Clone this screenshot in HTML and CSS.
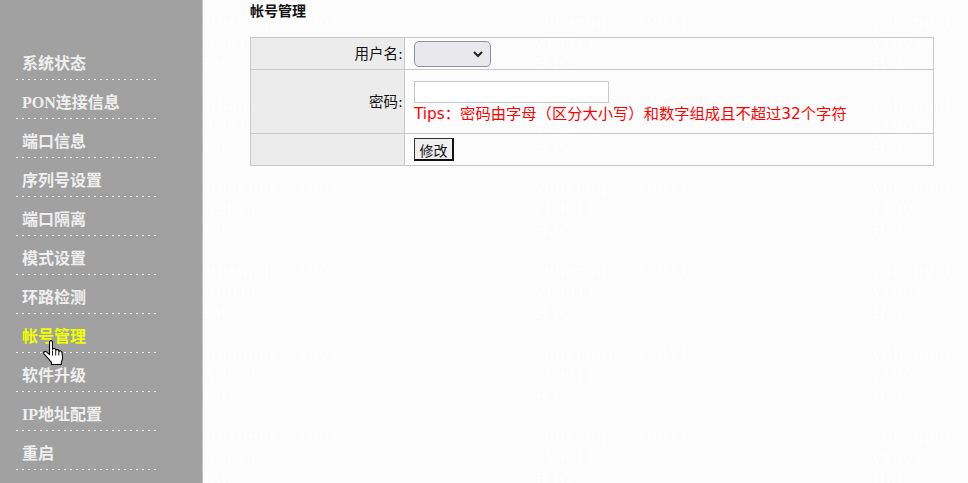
FILE: index.html
```html
<!DOCTYPE html>
<html>
<head>
    <meta charset="utf-8">
    <link rel="stylesheet" href="styles.css">
</head>
<body>
    <div class="watermark">
        <div class="mark">yuhangqi&nbsp;&nbsp;&nbsp;&nbsp;19011<br>y19011<br>H3C</div>
        <div class="mark">yuhangqi&nbsp;&nbsp;&nbsp;&nbsp;19011<br>y19011<br>H3C</div>
        <div class="mark">yuhangqi&nbsp;&nbsp;&nbsp;&nbsp;19011<br>y19011<br>H3C</div>
        <div class="mark">yuhangqi&nbsp;&nbsp;&nbsp;&nbsp;19011<br>y19011<br>H3C</div>
        <div class="mark">yuhangqi&nbsp;&nbsp;&nbsp;&nbsp;19011<br>y19011<br>H3C</div>
        <div class="mark">yuhangqi&nbsp;&nbsp;&nbsp;&nbsp;19011<br>y19011<br>H3C</div>
        <div class="mark">yuhangqi&nbsp;&nbsp;&nbsp;&nbsp;19011<br>y19011<br>H3C</div>
        <div class="mark">yuhangqi&nbsp;&nbsp;&nbsp;&nbsp;19011<br>y19011<br>H3C</div>
        <div class="mark">yuhangqi&nbsp;&nbsp;&nbsp;&nbsp;19011<br>y19011<br>H3C</div>
        <div class="mark">yuhangqi&nbsp;&nbsp;&nbsp;&nbsp;19011<br>y19011<br>H3C</div>
        <div class="mark">yuhangqi&nbsp;&nbsp;&nbsp;&nbsp;19011<br>y19011<br>H3C</div>
        <div class="mark">yuhangqi&nbsp;&nbsp;&nbsp;&nbsp;19011<br>y19011<br>H3C</div>
        <div class="mark">yuhangqi&nbsp;&nbsp;&nbsp;&nbsp;19011<br>y19011<br>H3C</div>
        <div class="mark">yuhangqi&nbsp;&nbsp;&nbsp;&nbsp;19011<br>y19011<br>H3C</div>
        <div class="mark">yuhangqi&nbsp;&nbsp;&nbsp;&nbsp;19011<br>y19011<br>H3C</div>
        <div class="mark">yuhangqi&nbsp;&nbsp;&nbsp;&nbsp;19011<br>y19011<br>H3C</div>
        <div class="mark">yuhangqi&nbsp;&nbsp;&nbsp;&nbsp;19011<br>y19011<br>H3C</div>
        <div class="mark">yuhangqi&nbsp;&nbsp;&nbsp;&nbsp;19011<br>y19011<br>H3C</div>
    </div>

    <div class="page">
        <div class="sidebar">
            <ul class="menu">
                <li class="menu-item">系统状态</li>
                <li class="menu-item">PON连接信息</li>
                <li class="menu-item">端口信息</li>
                <li class="menu-item">序列号设置</li>
                <li class="menu-item">端口隔离</li>
                <li class="menu-item">模式设置</li>
                <li class="menu-item">环路检测</li>
                <li class="menu-item active">帐号管理</li>
                <li class="menu-item">软件升级</li>
                <li class="menu-item">IP地址配置</li>
                <li class="menu-item">重启</li>
            </ul>
        </div>

        <div class="content">
            <h1 class="title">帐号管理</h1>
            <table class="form-table">
                <tr class="row-user">
                    <td class="label">用户名:</td>
                    <td class="field">
                        <select class="user-select"><option></option></select>
                    </td>
                </tr>
                <tr class="row-pass">
                    <td class="label">密码:</td>
                    <td class="field">
                        <input class="pass-input" type="password">
                        <div class="tips">Tips：密码由字母（区分大小写）和数字组成且不超过32个字符</div>
                    </td>
                </tr>
                <tr class="row-submit">
                    <td class="label"></td>
                    <td class="field"><button class="submit-btn">修改</button></td>
                </tr>
            </table>
        </div>
    </div>

    <svg class="cursor" width="23" height="26" viewBox="0 0 23 26">
        <path d="M6.500 2c0-1.800 3-1.800 3 0v7.500c.3-1.300 2.900-1.300 3.100 0l.1 1c.4-1.200 2.900-1.100 3.100.200l.1.800c.6-1 2.800-.7 3 .7l.7 5.300c.1 1.700-.5 3.200-1.300 4.500v2.500H8.500v-2.300c-1-.7-1.700-1.500-2.400-2.700L1 13.800c-1-1.500.8-3.200 2.300-2.100l3.200 3z" fill="#fff" stroke="#000" stroke-width="1.100" stroke-linejoin="round"/>
        <path d="M9.500 10.500v5M12.700 11v4.500M15.800 11.500v4" fill="none" stroke="#000" stroke-width=".9"/>
    </svg>
</body>
</html>
```

FILE: styles.css
```css
body {
    margin: 0;
    height: 483px;
    overflow: hidden;
    background: #fcfcfc;
    font-family: "Liberation Serif", "Noto Sans CJK SC", serif;
}

.page {
    display: flex;
    height: 483px;
}

.sidebar {
    width: 203px;
    flex-shrink: 0;
    background: #a1a1a1;
    border-right: 1px solid #c4c4c4;
    box-sizing: border-box;
    padding: 41px 44px 0 16px;
}

.menu {
    list-style: none;
    margin: 0;
    padding: 0;
}

.menu-item {
    height: 39px;
    line-height: 46px;
    padding-left: 6px;
    background-image: repeating-linear-gradient(90deg, #f2f2f2 0 2px, transparent 2px 6px);
    background-size: 100% 1px;
    background-position: 0 100%;
    background-repeat: no-repeat;
    font-size: 16px;
    font-weight: bold;
    color: #efefef;
}

.menu-item.active {
    color: #eeff00;
}

.content {
    flex: 1;
    padding: 0 34px 0 47px;
}

.title {
    margin: 0 0 17px;
    height: 20px;
    line-height: 20px;
    font-size: 14px;
    font-weight: bold;
    color: #111;
    font-family: "Noto Sans CJK SC", sans-serif;
}

.form-table {
    width: 684px;
    border-collapse: collapse;
    table-layout: fixed;
    border: 1px solid #c8c8c8;
    font-family: "DejaVu Sans", "Noto Sans CJK SC", sans-serif;
}

.form-table td {
    border: 1px solid #c8c8c8;
    padding: 0;
}

.row-user { height: 32px; }
.row-pass { height: 64px; }
.row-submit { height: 32px; }

.form-table .label {
    width: 152px;
    padding: 0 1px 2px 0;
    background: #ececec;
    text-align: right;
    font-size: 14.5px;
    color: #111;
}

.form-table .field {
    padding-left: 9px;
}

.user-select {
    display: block;
    width: 77px;
    height: 26px;
    appearance: none;
    background-color: #e9e9ed;
    background-image: url("data:image/svg+xml,%3Csvg xmlns='http://www.w3.org/2000/svg' width='10' height='7'%3E%3Cpath d='M1 1l4 4 4-4' fill='none' stroke='%23222' stroke-width='2'/%3E%3C/svg%3E");
    background-repeat: no-repeat;
    background-position: 58px 9px;
    border: 1px solid #8f8f9d;
    border-radius: 5px;
}

.pass-input {
    display: block;
    width: 195px;
    height: 22px;
    box-sizing: border-box;
    margin: 1px 0 0;
    border: 1px solid #c8c8c8;
    background: #fff;
}

.tips {
    margin-top: 1px;
    font-size: 15.3px;
    line-height: 20px;
    color: #ff0000;
    white-space: nowrap;
}

.submit-btn {
    display: block;
    width: 40px;
    height: 23px;
    padding: 1px 0 0;
    background: #efefef;
    border: 1px solid #333;
    border-right: 2px solid #111;
    border-bottom: 2px solid #111;
    font-size: 14px;
    line-height: 18px;
    color: #111;
    font-family: "Noto Sans CJK SC", sans-serif;
}

/* background watermark, tiles over the whole window */
.watermark {
    position: absolute;
    top: 0;
    left: 197px;
    right: 0;
    height: 483px;
    box-sizing: border-box;
    padding-top: 12px;
    overflow: hidden;
    display: grid;
    grid-template-columns: repeat(3, 338px);
    grid-auto-rows: 83px;
    z-index: -1;
}

.mark {
    font-family: "DejaVu Serif", serif;
    font-size: 15px;
    line-height: 21px;
    letter-spacing: 1px;
    color: #fff;
    white-space: nowrap;
}

.cursor {
    position: absolute;
    left: 43px;
    top: 340px;
}
```
